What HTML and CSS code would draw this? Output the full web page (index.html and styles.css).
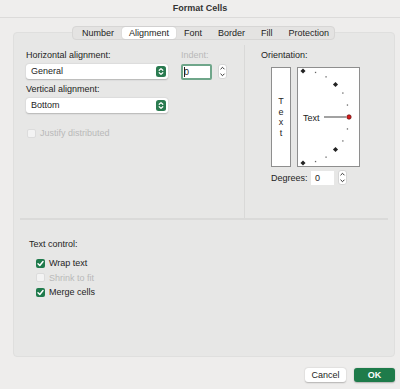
FILE: index.html
```html
<!DOCTYPE html>
<html>
<head>
<meta charset="utf-8">
<link rel="stylesheet" href="styles.css">
</head>
<body>
<div class="titlebar"><span class="title">Format Cells</span></div>
<div class="tabs-wrap">
  <div class="tabs">
    <span class="tab">Number</span>
    <span class="tab sel">Alignment</span>
    <span class="tab">Font</span>
    <span class="sep"></span>
    <span class="tab">Border</span>
    <span class="sep"></span>
    <span class="tab">Fill</span>
    <span class="sep"></span>
    <span class="tab">Protection</span>
  </div>
</div>
<div class="panel">
  <div class="top">
    <div class="left">
      <div class="lbl">Horizontal alignment:</div>
      <div class="lbl dis">Indent:</div>
      <div class="select"><span>General</span>
        <svg class="pop" width="10" height="11" viewBox="0 0 10 11"><rect width="10" height="11" rx="2.5" fill="#2a7b50"/><path d="M3.2 4.3 L5 2.6 L6.8 4.3 M3.2 6.7 L5 8.4 L6.8 6.7" stroke="#fff" stroke-width="1.2" fill="none" stroke-linecap="round" stroke-linejoin="round"/></svg>
      </div>
      <div class="indent">
        <div class="num focus"><span class="caret"></span>0</div>
        <svg class="step" width="9" height="15" viewBox="0 0 9 15"><rect x="0.5" y="0.5" width="8" height="14" rx="2.5" fill="#fff" stroke="#d6d6d6"/><path d="M2.8 5 L4.5 3.3 L6.2 5 M2.8 10 L4.5 11.7 L6.2 10" stroke="#333" stroke-width="1" fill="none" stroke-linecap="round"/></svg>
      </div>
      <div class="lbl row3">Vertical alignment:</div>
      <div class="select row4"><span>Bottom</span>
        <svg class="pop" width="10" height="11" viewBox="0 0 10 11"><rect width="10" height="11" rx="2.5" fill="#2a7b50"/><path d="M3.2 4.3 L5 2.6 L6.8 4.3 M3.2 6.7 L5 8.4 L6.8 6.7" stroke="#fff" stroke-width="1.2" fill="none" stroke-linecap="round" stroke-linejoin="round"/></svg>
      </div>
      <div class="check justify dis"><span class="box off"></span>Justify distributed</div>
    </div>
    <div class="right">
      <div class="lbl">Orientation:</div>
      <div class="orient">
        <div class="vtext"><span>T</span><span>e</span><span>x</span><span>t</span></div>
        <svg class="arc" width="63" height="100" viewBox="0 0 63 100">
          <rect x="0.5" y="0.5" width="62" height="99" fill="#fff" stroke="#8e8e8e"/>
          <g fill="#666">
            <rect x="17.9" y="4.8" width="1.3" height="1.3"/>
            <rect x="28.4" y="9.2" width="1.3" height="1.3"/>
            <rect x="45.2" y="25.4" width="1.3" height="1.3"/>
            <rect x="49.8" y="37.4" width="1.3" height="1.3"/>
            <rect x="49.8" y="61.3" width="1.3" height="1.3"/>
            <rect x="45.2" y="73.3" width="1.3" height="1.3"/>
            <rect x="28.4" y="89.5" width="1.3" height="1.3"/>
            <rect x="17.9" y="93.9" width="1.3" height="1.3"/>
          </g>
          <g fill="#222">
            <rect x="4.2" y="2.2" width="3.6" height="3.6" transform="rotate(45 6 4)"/>
            <rect x="36.7" y="15.7" width="3.6" height="3.6" transform="rotate(45 38.5 17.5)"/>
            <rect x="36.7" y="80.7" width="3.6" height="3.6" transform="rotate(45 38.5 82.5)"/>
            <rect x="4.2" y="94.2" width="3.6" height="3.6" transform="rotate(45 6 96)"/>
          </g>
          <text x="6" y="53.5" font-family="Liberation Sans, Arial, sans-serif" font-size="9" fill="#222">Text</text>
          <line x1="27" y1="50" x2="49" y2="50" stroke="#7a7a7a" stroke-width="1.4"/>
          <circle cx="52" cy="50" r="2.2" fill="#d81b1b" stroke="#5a1010" stroke-width="0.7"/>
        </svg>
      </div>
      <div class="degrees">
        <span class="dlbl">Degrees:</span>
        <div class="num deg">0</div>
        <svg class="step" width="9" height="15" viewBox="0 0 9 15"><rect x="0.5" y="0.5" width="8" height="14" rx="2.5" fill="#fff" stroke="#d6d6d6"/><path d="M2.8 5 L4.5 3.3 L6.2 5 M2.8 10 L4.5 11.7 L6.2 10" stroke="#333" stroke-width="1" fill="none" stroke-linecap="round"/></svg>
      </div>
    </div>
  </div>
  <div class="hr"></div>
  <div class="textctl">
    <div class="lbl">Text control:</div>
    <div class="check"><span class="box on"><svg width="9" height="9" viewBox="0 0 9 9"><path d="M2 4.7 L3.8 6.5 L7 2.6" stroke="#fff" stroke-width="1.5" fill="none" stroke-linecap="round" stroke-linejoin="round"/></svg></span>Wrap text</div>
    <div class="check dis"><span class="box off"></span>Shrink to fit</div>
    <div class="check"><span class="box on"><svg width="9" height="9" viewBox="0 0 9 9"><path d="M2 4.7 L3.8 6.5 L7 2.6" stroke="#fff" stroke-width="1.5" fill="none" stroke-linecap="round" stroke-linejoin="round"/></svg></span>Merge cells</div>
  </div>
</div>
<div class="footer">
  <button class="btn">Cancel</button>
  <button class="btn ok">OK</button>
</div>
</body>
</html>
```

FILE: styles.css
```css
* { box-sizing: border-box; }
html, body { margin: 0; padding: 0; }
body {
  width: 400px;
  height: 389px;
  overflow: hidden;
  background: #eeedec;
  font-family: "Liberation Sans", Arial, sans-serif;
  font-size: 9px;
  color: #242424;
}
.titlebar {
  height: 18px;
  border-bottom: 1px solid #dcdbda;
  display: flex;
  justify-content: center;
  align-items: center;
  padding-bottom: 1px;
  background: #efeeed;
}
.title { font-weight: bold; color: #333; }
.tabs-wrap {
  display: flex;
  margin-top: 8px;
  margin-bottom: -8px;
  padding-left: 72px;
  position: relative;
  z-index: 1;
}
.tabs {
  display: flex;
  align-items: center;
  height: 14px;
  width: 263px;
  background: #e4e3e2;
  border: 1px solid #d7d6d5;
  border-radius: 4px;
  padding: 0 0 0 1px;
}
.tab {
  height: 12px;
  line-height: 12px;
  padding: 0 8px;
  color: #242424;
}
.tab.sel {
  background: #fff;
  border-radius: 3px;
  box-shadow: 0 0 1px rgba(0,0,0,0.25);
  padding: 0 7px;
}
.sep {
  width: 1px;
  height: 8px;
  background: #cfcecd;
}
.panel {
  margin-left: 13px;
  width: 382px;
  height: 325px;
  background: #e7e7e6;
  border: 1px solid #dfdfde;
  border-radius: 4px;
}
.top {
  display: flex;
  margin-top: 12px;
  height: 173px;
}
.left {
  width: 230px;
  padding: 4px 0 0 12px;
  display: grid;
  grid-template-columns: 142px auto;
  grid-template-rows: 12px 15px 12px 15px auto;
  column-gap: 13px;
  row-gap: 3px;
  align-content: start;
}
.lbl { line-height: 12px; height: 12px; white-space: nowrap; }
.dis { color: #b9b9b9; }
.select {
  height: 15px;
  background: #fff;
  border-radius: 3px;
  box-shadow: 0 0.5px 1.5px rgba(0,0,0,0.22);
  display: flex;
  align-items: center;
  justify-content: space-between;
  padding: 0 2px 0 5px;
  line-height: 15px;
}
.row3 { margin-top: 1px; grid-column: 1 / 3; }
.row4 { margin-top: 1px; }
.pop { display: block; }
.indent { display: flex; align-items: flex-start; gap: 6px; }
.num {
  height: 16px;
  width: 31px;
  background: #fff;
  line-height: 14px;
  padding-left: 3px;
  position: relative;
  display: flex;
  align-items: center;
}
.num.focus {
  border: 2px solid #6fa68a;
  border-radius: 2px;
  padding-left: 1px;
}
.caret {
  width: 1px;
  height: 10px;
  background: #222;
  margin-right: -1px;
}
.step { display: block; }
.justify {
  grid-column: 1 / 3;
  margin-top: 11px;
  padding-left: 1px;
}
.check {
  display: flex;
  align-items: center;
  height: 14.5px;
  gap: 4px;
  white-space: nowrap;
}
.box {
  width: 9px;
  height: 9px;
  border-radius: 2px;
  display: block;
  flex: none;
}
.box svg { display: block; }
.box.on { background: #1f7a4c; }
.box.off { background: #f3f3f3; border: 1px solid #dcdcdc; }
.right {
  flex: 1;
  border-left: 1px solid #d9d9d8;
  padding: 4px 0 0 16px;
}
.orient {
  display: flex;
  gap: 6px;
  margin: 6px 0 0 10px;
}
.vtext {
  width: 20px;
  height: 100px;
  background: #fff;
  border: 1px solid #8e8e8e;
  display: flex;
  flex-direction: column;
  align-items: center;
  justify-content: center;
}
.vtext span { line-height: 10.5px; }
.arc { display: block; }
.degrees {
  display: flex;
  align-items: center;
  margin: 3px 0 0 10px;
  height: 15px;
}
.dlbl { width: 40px; }
.num.deg {
  width: 23px;
  height: 14px;
  margin-right: 4px;
  padding-left: 4px;
}
.hr {
  height: 2px;
  background: #dadad9;
  margin: 0 6px;
}
.textctl {
  padding: 18px 0 0 15px;
}
.textctl .lbl { margin-bottom: 6px; }
.textctl .check { padding-left: 7px; }
.footer {
  display: flex;
  justify-content: flex-end;
  gap: 8px;
  width: 395px;
  margin-top: 11px;
}
.btn {
  width: 41px;
  height: 14px;
  border: none;
  border-radius: 3px;
  font-family: "Liberation Sans", Arial, sans-serif;
  font-size: 9px;
  padding: 0;
  line-height: 14px;
  background: #fff;
  color: #242424;
  box-shadow: 0 0.5px 1.5px rgba(0,0,0,0.25);
}
.btn.ok {
  background: #1e7b4a;
  color: #fff;
  font-weight: bold;
}
```
